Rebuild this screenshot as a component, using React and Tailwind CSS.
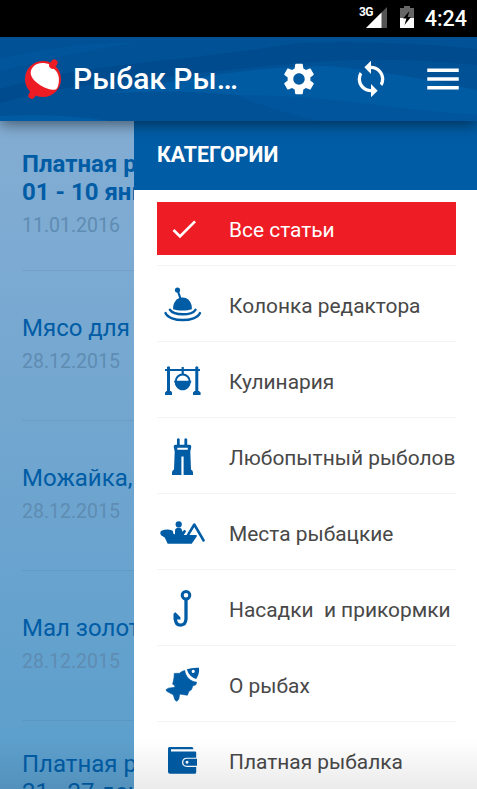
import { MdSettings, MdSync, MdMenu, MdCheck } from 'react-icons/md';

const articles = [
  { title: ['Платная рыбалка', '01 - 10 января'], date: '11.01.2016', unread: true },
  { title: ['Мясо для рыбы'], date: '28.12.2015' },
  { title: ['Можайка, первый лёд'], date: '28.12.2015' },
  { title: ['Мал золотник'], date: '28.12.2015' },
  { title: ['Платная рыбалка', '21 - 27 декабря'], date: '28.12.2015' },
];

const BobberIcon = () => (
  <svg width="54" height="48" viewBox="0 0 54 48" fill="#005ca5">
    <circle cx="20.5" cy="10" r="2.6" />
    <path d="M20.5 10L24 20" stroke="#005ca5" strokeWidth="2.2" />
    <path d="M16.1 29.3C15.6 22 20.3 17.4 25.5 17.4S35.4 22 34.8 29.3C30 31 21 31 16.1 29.3Z" />
    <path d="M12.9 29.8C17 35.8 34.5 35.8 38.5 29.8M8.5 33C12.5 42.4 39 42.4 43 33" fill="none" stroke="#005ca5" strokeWidth="2.4" strokeLinecap="round" />
  </svg>
);

const PotIcon = () => (
  <svg width="54" height="48" viewBox="0 0 54 48" fill="#005ca5">
    <path d="M8 13h35v2H8zM10 11.2q1.5-2 3 0V35.5H10zM38.3 11.2q1.5-2 3 0V35.5h-3zM24.6 11h2.2v7h-2.2z" />
    <path d="M9.5 35h4.5l1 1.5V39H8v-2.5zM37.5 35H42l1.6 1.5V39H36v-2.5z" />
    <circle cx="25.7" cy="25.5" r="7" fill="none" stroke="#005ca5" strokeWidth="2" />
    <path d="M17.2 24.8h17v1.7h-.7c-.6 4.8-3.7 7.8-7.8 7.8s-7.2-3-7.8-7.8h-.7z" />
  </svg>
);

const WadersIcon = () => (
  <svg width="54" height="48" viewBox="0 0 54 48" fill="#005ca5">
    <path
      fillRule="evenodd"
      d="M20 7Q21.3 5.5 22.7 7V12.8H27.4V7Q28.8 5.5 30.2 7V12.8H32.5Q34.4 12.8 34.3 14.8L33.3 19.5 34 37.6Q36 38.4 36 40.5V43H26.6V24.6H24.4V43H15V40.5Q15 38.4 17 37.6L17.7 19.5 16.7 14.8Q16.6 12.8 18.5 12.8H20ZM20.3 15.8V17.8H30.8V15.8Z"
    />
  </svg>
);

const BoatIcon = () => (
  <svg width="54" height="48" viewBox="0 0 54 48" fill="#005ca5">
    <circle cx="21.7" cy="16.4" r="3.1" />
    <path d="M18 23q0-3.2 3.7-3.2 3.3 0 3.3 3v1l2.6-2 1.6 1.4-2.4 3.8-2 1.5H18z" />
    <path d="M5 22.4q5.5-2 10.3.2 1.2 1.2.9 3L19 27h20.7v1.6l-5 7.2h-24L7.7 29.5 4 27.2Q2.2 23.6 5 22.4z" />
    <path d="M30.7 27.5L37.3 16.5 46.6 32.5" fill="none" stroke="#005ca5" strokeWidth="2.5" strokeLinecap="round" strokeLinejoin="round" />
  </svg>
);

const HookIcon = () => (
  <svg width="54" height="48" viewBox="0 0 54 48" fill="none" stroke="#005ca5">
    <circle cx="29" cy="11.2" r="3.8" strokeWidth="3" />
    <path d="M29 15.5V35Q28.6 41 23.6 41.1 18.5 41 18.4 35V30" strokeWidth="3.3" />
    <path d="M16.9 36V29.4L18.5 28.6 23.2 33.2V35.4L20.3 35 19.5 37z" fill="#005ca5" strokeWidth=".4" />
  </svg>
);

const FishIcon = () => (
  <svg width="54" height="48" viewBox="0 0 54 48" fill="#005ca5">
    <path d="M27.7 10.5C28.5 16.5 33 21.6 39.6 22.2L38.8 24.8 35.8 25.8 34.5 29.5 31.8 31.5 30.4 35.2 26 34.6 22.6 34 21.8 39 20 41.3 18 40 16.3 34.8 9.8 31.3 9 29.7 11.5 28.2 17.2 27.4 18.2 25.8 15.7 24.2 17 18 17.3 13.4 22.5 13.3 25 11.5Z" stroke="#005ca5" strokeWidth=".7" strokeLinejoin="round" />
    <path fillRule="evenodd" d="M29.8 9.3Q35 7.3 42 7.7q.7 6-2.8 11.3-7-2-9.4-9.7zM36.2 9.8a1.6 1.6 0 1 0 .1 3.2 1.6 1.6 0 0 0-.1-3.2z" />
  </svg>
);

const WalletIcon = () => (
  <svg width="54" height="48" viewBox="0 0 54 48" fill="#005ca5">
    <path
      fillRule="evenodd"
      d="M12.5 11h22q2 0 2 2.2H14v2.2h24q1.2 0 1.2 1V21.7H30q-5 .2-5 4.6t5 4.6h9.2v5.3q0 1.6-1.6 1.6H13q-2 0-2-2V12.5q0-1.5 1.5-1.5z"
    />
    <path fillRule="evenodd" d="M30 22.8h10v7H30q-3.7 0-3.7-3.5t3.7-3.5zm0 2a1.5 1.5 0 1 0 .01 3 1.5 1.5 0 0 0-.01-3z" />
  </svg>
);

const categories = [
  { title: 'Колонка редактора', icon: <BobberIcon /> },
  { title: 'Кулинария', icon: <PotIcon /> },
  { title: 'Любопытный рыболов', icon: <WadersIcon /> },
  { title: 'Места рыбацкие', icon: <BoatIcon /> },
  { title: 'Насадки  и прикормки', icon: <HookIcon /> },
  { title: 'О рыбах', icon: <FishIcon /> },
  { title: 'Платная рыбалка', icon: <WalletIcon /> },
];

function StatusBar() {
  return (
    <div className="flex h-[37px] shrink-0 items-center justify-end bg-black pr-[10px] text-white">
      <span className="mr-[-7px] mb-[13px] text-[12px] leading-none font-bold tracking-[-0.7px]">3G</span>
      <svg width="21" height="21" viewBox="0 0 21 21" className="mb-[2px]">
        <path d="M0 21L21 0V21z" fill="#555" />
        <path d="M0 21L15.5 5.5V21z" fill="#fff" />
      </svg>
      <svg width="14" height="22" viewBox="0 0 14 22" className="mb-[3px] ml-[13px]">
        <path d="M4 0h6v2h4v20H0V2h4z" fill="#666" />
        <path d="M0 12h14v10H0z" fill="#fff" />
        <path d="M9.5 5L3 12.5h3.4L4.5 19l6.5-8H7.6z" fill="#000" />
      </svg>
      <span className="ml-[11px] text-[21.5px] leading-none font-medium">4:24</span>
    </div>
  );
}

function Header() {
  return (
    <header className="relative z-10 flex h-[84px] shrink-0 items-center bg-[#005196] text-white shadow-[0_3px_14px_rgba(0,0,0,0.5)]">
      {/* water waves behind the title */}
      <svg className="absolute inset-0" width="477" height="84" viewBox="0 0 477 84">
        <path d="M0 52Q60 34 140 26T300 6Q390 3 477 12V28Q400 20 330 24T150 42Q60 48 0 66z" fill="#004b8d" />
        <path d="M0 22Q60 6 140 5Q80 14 0 34z" fill="#00559b" />
        <path d="M110 56Q250 28 330 29Q400 36 477 53V84H322Q270 73 237 58Q180 52 110 56z" fill="#005ba3" />
        <path d="M237 58Q300 58 360 66T477 78V84H322Q270 73 237 58z" fill="#00559c" />
        <path d="M0 79Q60 76 110 84H0z" fill="#005ba3" />
      </svg>
      <div className="relative flex w-full items-center">
        <svg width="40" height="42" viewBox="0 0 40 42" className="ml-[23px] shrink-0">
          <circle cx="20" cy="21" r="18" fill="#ed1c24" />
          <path d="M7.7 15C7.7 9 13.5 5 19 5 22 5 25 5.5 26.3 6.5Q26 10 31 11C35 14 36.2 19 35.9 22 35.8 27 34.5 31.8 31.5 31.8 22 32 8 23 7.7 15Z" fill="#fff" />
          <path d="M31.3 4.7L29.5 7.5M8.7 37.5L10.5 34.5" stroke="#ed1c24" strokeWidth="6.6" strokeLinecap="round" />
        </svg>
        <h1 className="ml-[10px] w-[190px] text-[30px] leading-none font-medium">Рыбак Ры…</h1>
        <MdSettings className="ml-[17px] size-[38px] shrink-0" />
        <MdSync className="ml-[33px] size-[40px] shrink-0" />
        <MdMenu className="ml-[31px] size-[42px] shrink-0" />
      </div>
    </header>
  );
}

function ArticleList() {
  return (
    <div className="h-full w-[134px] shrink-0 overflow-hidden bg-linear-to-b from-[#84add3] to-[#5a9ecc] pl-[22px]">
      {articles.map((article, index) => (
        <div key={index} className="flex h-[150px] flex-col justify-center border-b border-[#0000000d] pb-px whitespace-nowrap">
          <div className={article.unread ? 'text-2xl leading-7 font-bold text-[#005ca5]' : 'text-2xl leading-7 text-[#005ca5]'}>
            {article.title.map((line) => (
              <p key={line}>{line}</p>
            ))}
          </div>
          <p className="mt-1.5 text-[19.5px] leading-7 text-[#5f8cb2]">{article.date}</p>
        </div>
      ))}
    </div>
  );
}

function CategoryMenu() {
  return (
    <nav className="h-full flex-1 bg-white">
      <h2 className="flex h-[69px] items-center bg-[#005ca5] pb-[2px] pl-[23px] text-[21.3px] font-bold text-white">КАТЕГОРИИ</h2>
      <div className="ml-[23px] h-[76px] w-[299px] border-b border-[#f3f3f3] pt-3">
        <div className="flex h-[53px] items-center bg-[#ee1c25] text-white">
          <MdCheck className="ml-[11px] size-8" />
          <span className="ml-[29px] pt-[4px] text-[20.9px]">Все статьи</span>
        </div>
      </div>
      {categories.map((category) => (
        <div key={category.title} className="ml-[23px] flex h-[76px] w-[299px] items-center border-b border-[#f3f3f3]">
          <div className="w-[72px] shrink-0 pt-px">{category.icon}</div>
          <span className="pt-[6px] text-[20.9px] whitespace-pre text-[#484848]">{category.title}</span>
        </div>
      ))}
    </nav>
  );
}

export default function App() {
  return (
    <div className="relative flex h-[789px] w-[477px] flex-col overflow-hidden font-[Roboto,sans-serif]">
      <StatusBar />
      <Header />
      <div className="flex min-h-0 flex-1 overflow-hidden">
        <ArticleList />
        <CategoryMenu />
      </div>
      <div className="absolute inset-x-0 bottom-0 h-[50px] bg-linear-to-b from-transparent to-black/8" />
    </div>
  );
}
